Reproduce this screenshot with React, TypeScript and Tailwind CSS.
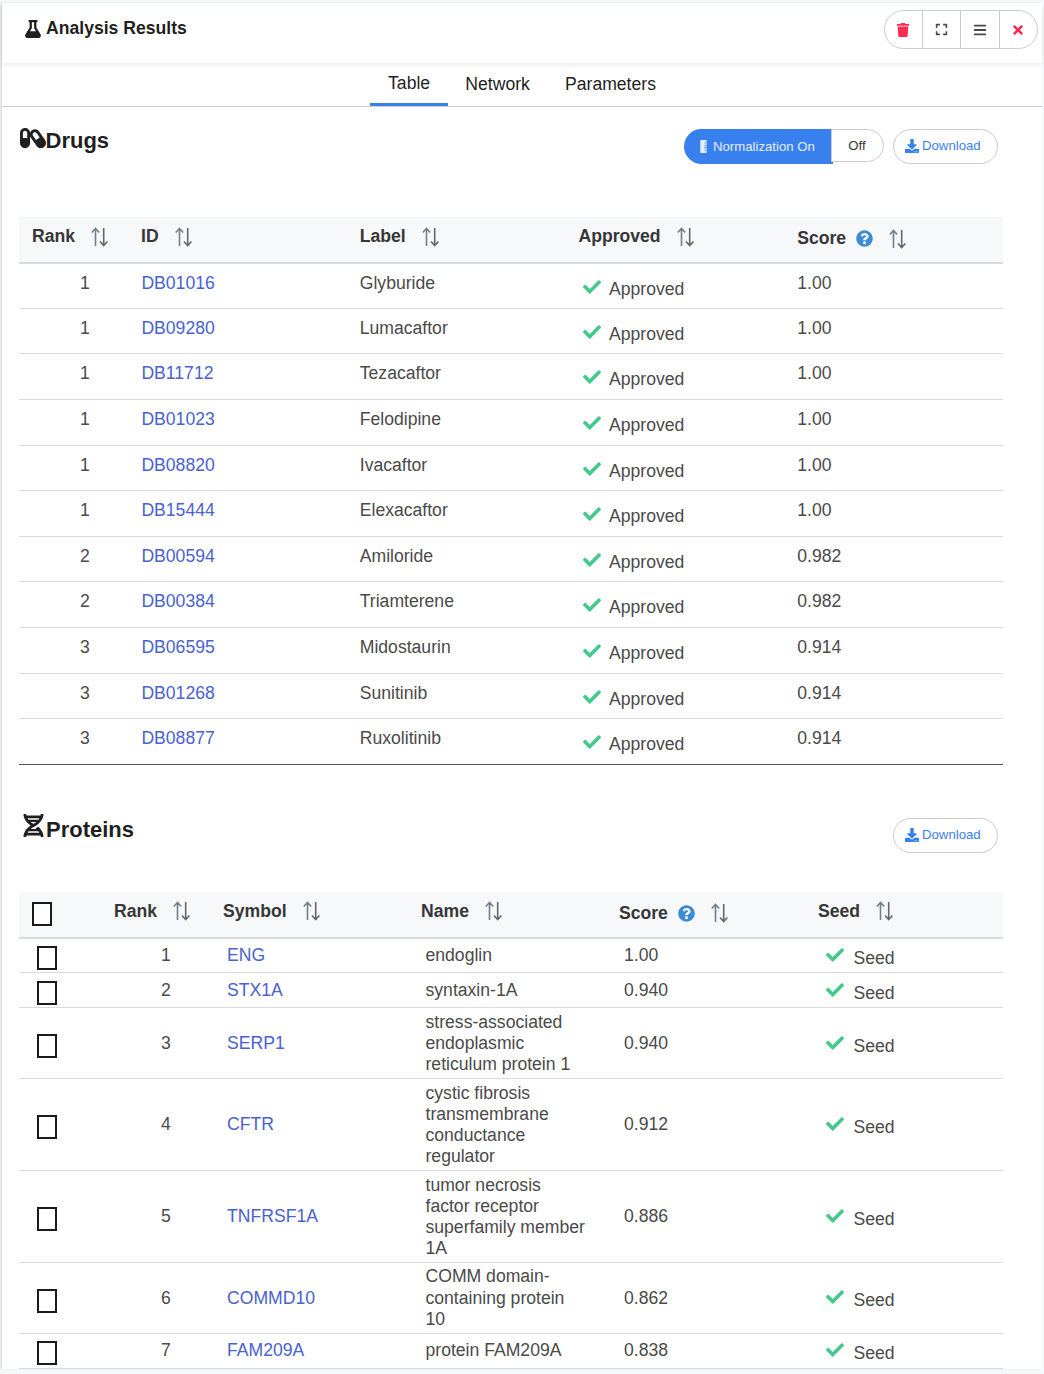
import React from 'react';
import {
  FaBars,
  FaCapsules,
  FaCheck,
  FaDna,
  FaDownload,
  FaExpand,
  FaFlask,
  FaQuestionCircle,
  FaRulerVertical,
  FaTimes,
  FaTrash,
} from 'react-icons/fa';

const drugs = [
  ['1', 'DB01016', 'Glyburide', '1.00'],
  ['1', 'DB09280', 'Lumacaftor', '1.00'],
  ['1', 'DB11712', 'Tezacaftor', '1.00'],
  ['1', 'DB01023', 'Felodipine', '1.00'],
  ['1', 'DB08820', 'Ivacaftor', '1.00'],
  ['1', 'DB15444', 'Elexacaftor', '1.00'],
  ['2', 'DB00594', 'Amiloride', '0.982'],
  ['2', 'DB00384', 'Triamterene', '0.982'],
  ['3', 'DB06595', 'Midostaurin', '0.914'],
  ['3', 'DB01268', 'Sunitinib', '0.914'],
  ['3', 'DB08877', 'Ruxolitinib', '0.914'],
];

const proteins = [
  ['1', 'ENG', 'endoglin', '1.00'],
  ['2', 'STX1A', 'syntaxin-1A', '0.940'],
  ['3', 'SERP1', 'stress-associated endoplasmic reticulum protein 1', '0.940'],
  ['4', 'CFTR', 'cystic fibrosis transmembrane conductance regulator', '0.912'],
  ['5', 'TNFRSF1A', 'tumor necrosis factor receptor superfamily member 1A', '0.886'],
  ['6', 'COMMD10', 'COMM domain-containing protein 10', '0.862'],
  ['7', 'FAM209A', 'protein FAM209A', '0.838'],
];

function SortIcon() {
  return (
    <svg className="ml-4 shrink-0" width="18" height="20" viewBox="0 0 18 20" fill="none" strokeWidth="1.6">
      <path d="M4.5 19V1.5M.8 5.5l3.7-4 3.7 4" stroke="#6f7f8c" />
      <path d="M12.7 1v17.5M9 14.5l3.7 4 3.7-4" stroke="#666" />
    </svg>
  );
}

function HeadCell({ label, help, className }: { label: string; help?: boolean; className?: string }) {
  return (
    <th className={`p-0 align-top text-left font-bold text-[#363636] ${className ?? ''}`}>
      <div className={`flex items-center pl-[13px] ${help ? 'pt-[11px]' : 'pt-[9px]'}`}>
        <span>{label}</span>
        {help && <FaQuestionCircle className="ml-[10px] shrink-0 text-[17px] text-[#3d8bd4]" />}
        <SortIcon />
      </div>
    </th>
  );
}

function DownloadButton() {
  return (
    <button className="ml-[9px] flex h-[35px] w-[105px] items-center gap-[3px] rounded-full border border-[#ccc] bg-white pb-px pl-[11px] text-[13.2px] text-[#3880ee]">
      <FaDownload className="text-[14px]" />
      Download
    </button>
  );
}

function Tab({ label, active }: { label: string; active?: boolean }) {
  return (
    <div
      className={`-mb-px flex h-[43px] items-center px-[17.6px] text-[#1f1f1f] ${
        active ? 'border-b-[3px] border-[#3880ee] pt-px' : ''
      }`}
    >
      {label}
    </div>
  );
}

function Checkbox() {
  return <div className="h-[24px] w-[20px] border-[2px] border-[#1a1a1a] bg-white" />;
}

export default function App() {
  return (
    <div className="h-[1374px] overflow-hidden bg-[#f7f8fa] pt-[3px] pr-[2px] pl-[2px] font-['Liberation_Sans',sans-serif] text-[17.6px] leading-[21.12px] text-[#4a4a4a]">
      <div className="bg-white shadow-[-2px_0_2px_rgba(0,0,0,0.1)]">
        {/* Card header */}
        <div className="flex h-[60px] items-start justify-between shadow-[0_2px_5px_rgba(0,0,0,0.08)]">
          <div className="flex items-center gap-[4px] pt-[15px] pl-[22px] text-[17.6px] font-bold text-[#1f1f1f]">
            <FaFlask className="text-[18px]" />
            Analysis Results
          </div>
          <div className="mt-[7px] mr-[4px] flex h-[39px] w-[154px] divide-x divide-[#ccc] overflow-hidden rounded-full border border-[#ccc]">
            <div className="flex w-[38px] items-center justify-center pr-px text-[14px] text-[#ff2b50]">
              <FaTrash />
            </div>
            <div className="flex w-[38px] items-center justify-center text-[13px] text-[#4a4a4a]">
              <FaExpand />
            </div>
            <div className="flex w-[39px] items-center justify-center text-[14px] text-[#4a4a4a]">
              <FaBars />
            </div>
            <div className="flex flex-1 items-center justify-center pr-[2px] text-[14px] text-[#ff2b50]">
              <FaTimes />
            </div>
          </div>
        </div>

        {/* Tabs */}
        <div className="flex h-[44px] justify-center border-b border-[#ccc]">
          <Tab label="Table" active />
          <Tab label="Network" />
          <Tab label="Parameters" />
        </div>

        <div className="pr-[39px] pl-[17px]">
          {/* Drugs */}
          <div className="flex h-[110px] items-start justify-between">
            <h2 className="flex items-center pt-[21px] text-[22px] leading-[26px] font-bold text-[#1f1f1f]">
              <FaCapsules className="ml-[0.5px] -translate-y-[3px] text-[26px]" />
              Drugs
            </h2>
            <div className="mt-[22px] mr-[5px] flex items-start">
              <button className="flex h-[35px] w-[149px] items-center rounded-l-full bg-[#3880ee] pl-[13px] text-[13.2px] text-[#e4edfc]">
                <FaRulerVertical className="mr-[3px] text-[13px]" />
                Normalization On
              </button>
              <button className="relative -ml-[2px] h-[33px] w-[53px] rounded-r-full border border-[#ccc] bg-white pr-[1px] text-[13.2px] text-[#363636]">
                Off
              </button>
              <DownloadButton />
            </div>
          </div>

          <table className="w-[984px] table-fixed border-collapse border-b border-[#555]">
            <colgroup>
              <col className="w-[109px]" />
              <col className="w-[218.75px]" />
              <col className="w-[218.75px]" />
              <col className="w-[218.75px]" />
              <col className="w-[218.75px]" />
            </colgroup>
            <thead>
              <tr className="h-[45.5px] border-b-2 border-[#dbdbdb] bg-[#f6f8fa]">
                <HeadCell label="Rank" />
                <HeadCell label="ID" />
                <HeadCell label="Label" />
                <HeadCell label="Approved" />
                <HeadCell label="Score" help />
              </tr>
            </thead>
            <tbody>
              {drugs.map((d, i) => (
                <tr key={d[1]} className={`h-[45.64px] ${i < drugs.length - 1 ? 'border-b border-[#dbdbdb]' : ''}`}>
                  <td className="p-0 pl-[61px] align-top pt-[9px]">{d[0]}</td>
                  <td className="p-0 pl-[13.4px] align-top pt-[9px] text-[#4a62d0]">{d[1]}</td>
                  <td className="p-0 pl-[13px] align-top pt-[9px]">{d[2]}</td>
                  <td className="p-0 pl-[17px] align-top pt-[15px]">
                    <div className="flex items-start">
                      <FaCheck className="mt-[-1px] text-[18px] text-[#44c88c]" />
                      <span className="ml-[8.5px]">Approved</span>
                    </div>
                  </td>
                  <td className="p-0 pl-[13px] align-top pt-[9px]">{d[3]}</td>
                </tr>
              ))}
            </tbody>
          </table>

          {/* Proteins */}
          <div className="flex h-[127px] items-start justify-between">
            <h2 className="flex items-center pt-[52px] text-[22px] leading-[26px] font-bold text-[#1f1f1f]">
              <FaDna className="mr-px ml-[3px] -translate-y-[4px] text-[23px]" />
              Proteins
            </h2>
            <div className="mt-[53px] mr-[5px]">
              <DownloadButton />
            </div>
          </div>

          <table className="w-[984px] table-fixed border-collapse">
            <colgroup>
              <col className="w-[82px]" />
              <col className="w-[109px]" />
              <col className="w-[198px]" />
              <col className="w-[198px]" />
              <col className="w-[199px]" />
              <col className="w-[198px]" />
            </colgroup>
            <thead>
              <tr className="h-[46px] border-b-2 border-[#dbdbdb] bg-[#f6f8fa]">
                <th className="p-0 pt-[10px] pl-[13px] align-top">
                  <Checkbox />
                </th>
                <HeadCell label="Rank" />
                <HeadCell label="Symbol" />
                <HeadCell label="Name" />
                <HeadCell label="Score" help />
                <HeadCell label="Seed" />
              </tr>
            </thead>
            <tbody>
              {proteins.map((p) => (
                <tr key={p[1]} className="h-[35px] border-b border-[#dbdbdb]">
                  <td className="p-0 pt-[5.5px] pl-[18px]">
                    <Checkbox />
                  </td>
                  <td className="p-0 pt-[0.6px] pl-[60px]">{p[0]}</td>
                  <td className="p-0 pt-[0.6px] pl-[17px] text-[#4a62d0]">{p[1]}</td>
                  <td className="px-[17.5px] pt-[3.5px] pb-[2.9px]">{p[2]}</td>
                  <td className="p-0 pt-[0.6px] pl-[18px]">{p[3]}</td>
                  <td className="p-0 pl-[21px]">
                    <div className="flex items-start pt-[6.5px]">
                      <FaCheck className="mt-[-2px] text-[18px] text-[#44c88c]" />
                      <span className="ml-[9.5px]">Seed</span>
                    </div>
                  </td>
                </tr>
              ))}
            </tbody>
          </table>
        </div>
      </div>
    </div>
  );
}
